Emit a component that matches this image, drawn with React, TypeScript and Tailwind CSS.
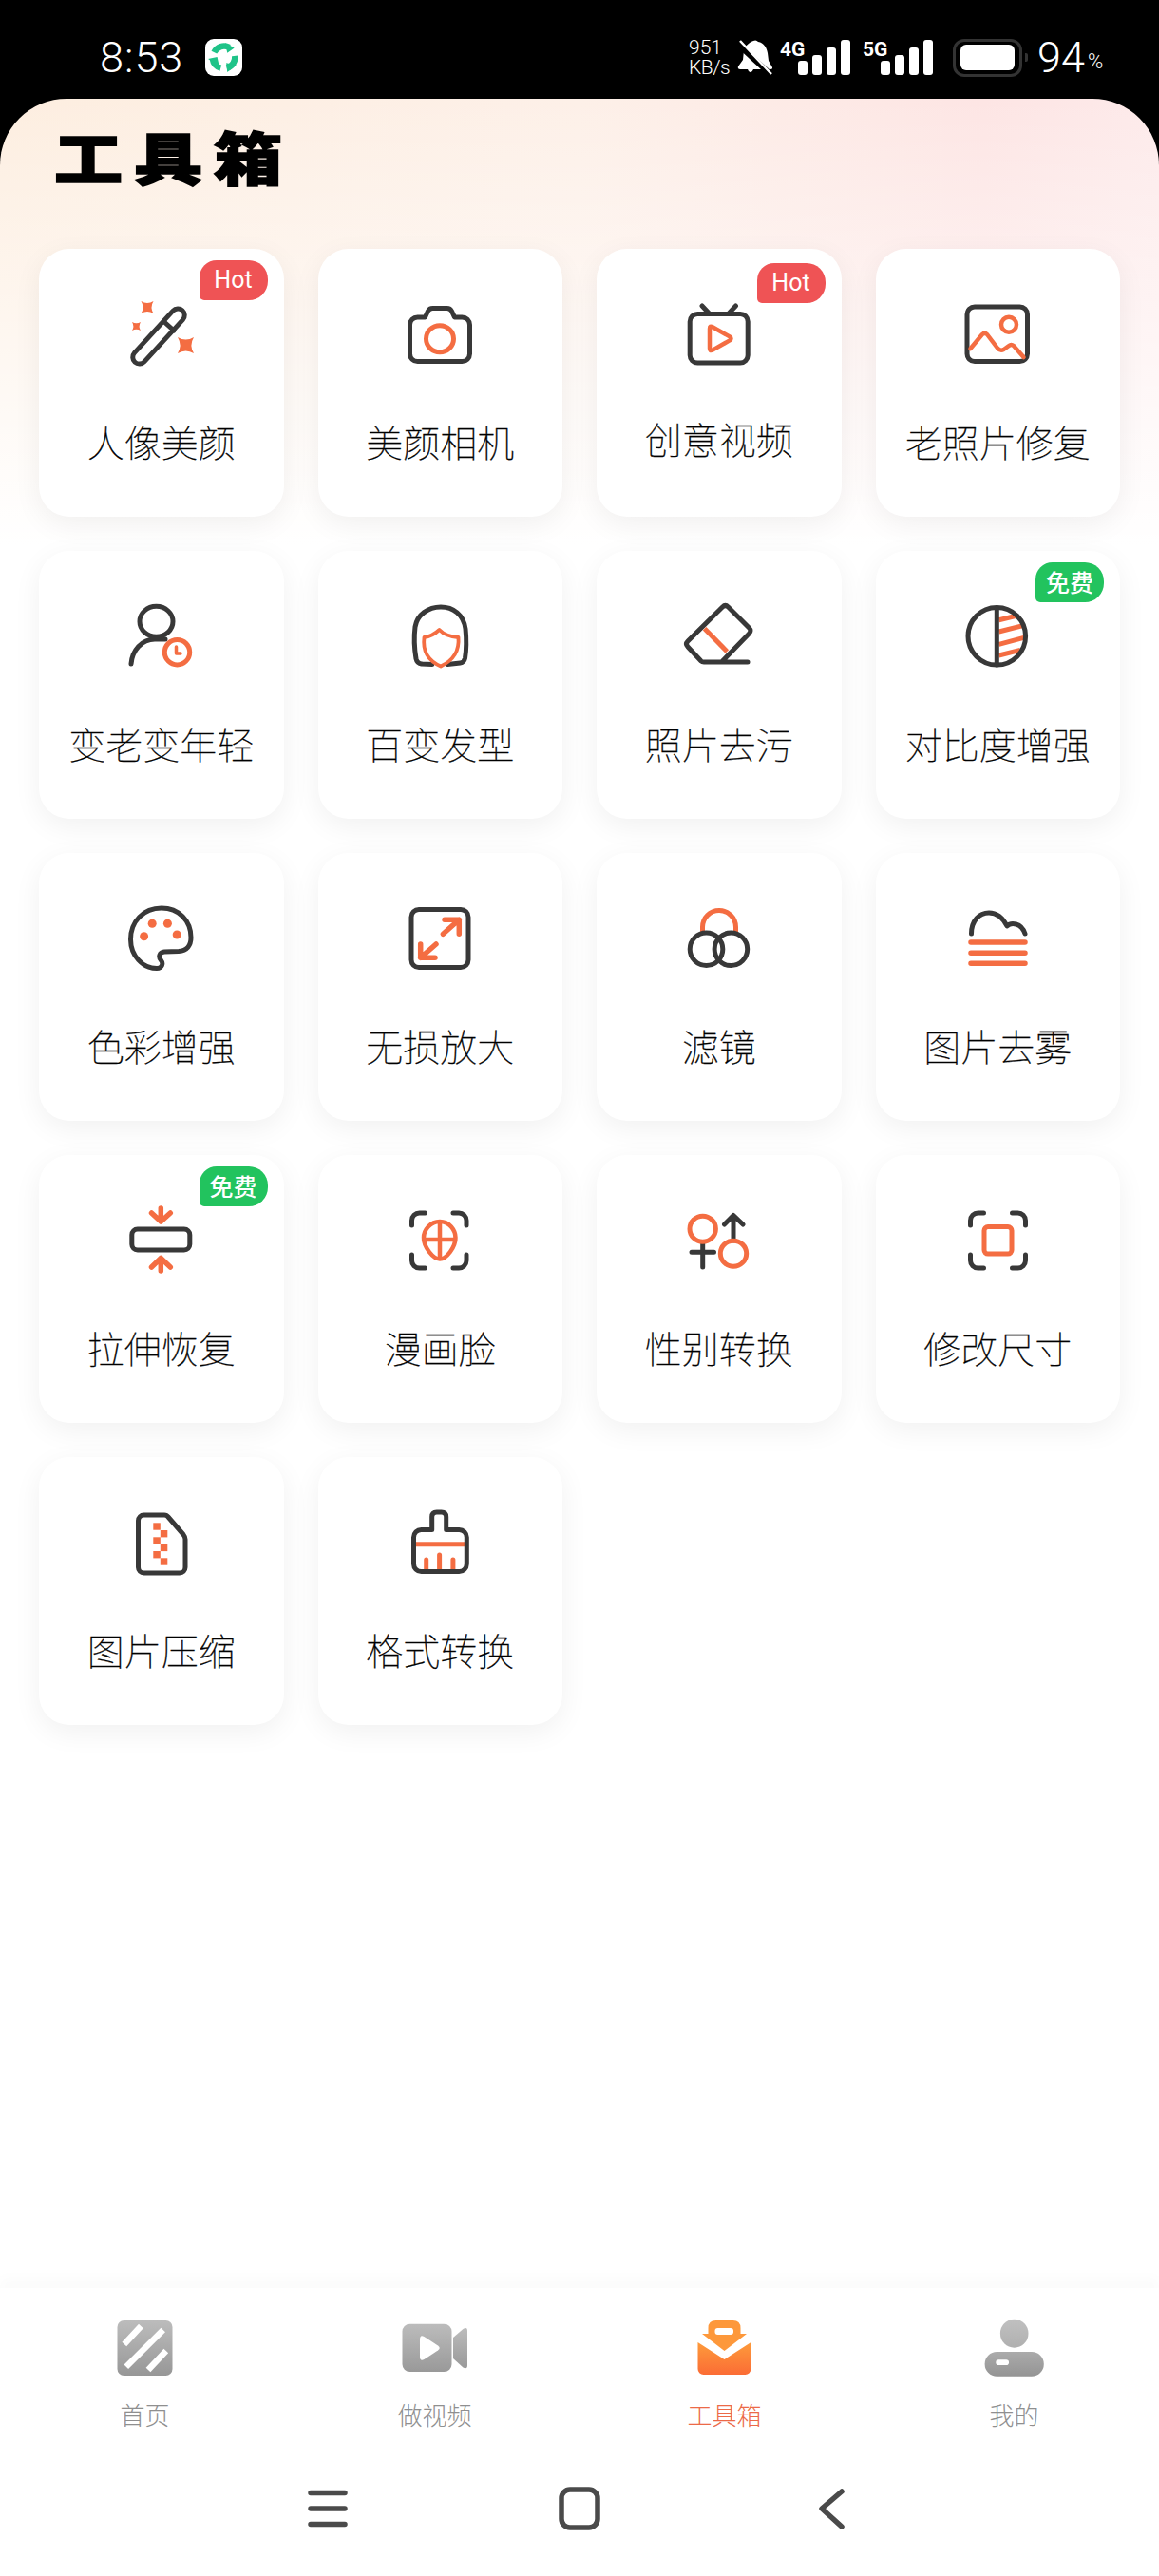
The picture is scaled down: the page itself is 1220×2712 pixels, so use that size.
import type { ReactNode } from "react";

const DARK = "#383838";
const ORANGE = "#f46d42";

/** Stroke defaults shared by the 80x80 tool icons. */
function Ico({ children }: { children: ReactNode }) {
  return (
    <svg width="80" height="80" viewBox="0 0 80 80" fill="none" strokeWidth="5" strokeLinecap="round" strokeLinejoin="round">
      {children}
    </svg>
  );
}

function Star({ x, y, r }: { x: number; y: number; r: number }) {
  const s = r * 0.2;
  return (
    <path
      fill={ORANGE}
      d={`M${x - r} ${y - r}Q${x} ${y - s * 2} ${x + r} ${y - r}Q${x + s * 2} ${y} ${x + r} ${y + r}Q${x} ${y + s * 2} ${x - r} ${y + r}Q${x - s * 2} ${y} ${x - r} ${y - r}z`}
    />
  );
}

const Brackets = ({ l, r }: { l: number; r: number }) => (
  <path
    stroke={DARK}
    d={`M${l} 24v-5a8 8 0 0 1 8-8h6M${r} 24v-5a8 8 0 0 0-8-8h-6M${l} 55v6a8 8 0 0 0 8 8h6M${r} 55v6a8 8 0 0 1-8 8h-6`}
  />
);

const icons: Record<string, ReactNode> = {
  wand: (
    <Ico>
      <rect x="0" y="-7" width="74" height="14" rx="7" stroke={DARK} transform="translate(37 42) rotate(-47.5) translate(-37 0)" />
      <path d="M43 27l10 9" stroke={DARK} />
      <Star x={25} y={11.5} r={6.5} />
      <Star x={13.5} y={31.5} r={4.5} />
      <Star x={65.5} y={51.5} r={8.5} />
    </Ico>
  ),
  camera: (
    <Ico>
      <path stroke={DARK} d="M16.5 22h8l3-6.5q1.5-3 5-3h15q3.5 0 5 3l3 6.5h8a8 8 0 0 1 8 8v30.5a8 8 0 0 1-8 8h-47a8 8 0 0 1-8-8V30a8 8 0 0 1 8-8z" />
      <ellipse cx="40" cy="44.7" rx="14.5" ry="14" stroke={ORANGE} />
    </Ico>
  ),
  tv: (
    <Ico>
      <rect x="9.2" y="18.5" width="61" height="51.5" rx="8" stroke={DARK} />
      <path stroke={DARK} d="M22 10l7 7.5M57.5 10l-7 7.5" />
      <path stroke={ORANGE} strokeWidth="4.500" d="M30 34q0-3.500 3-1.800l18 10.200q3 2 0 4l-18 10.200q-3 1.600-3-1.800z" />
    </Ico>
  ),
  photo: (
    <Ico>
      <rect x="8" y="11" width="63.500" height="57.500" rx="8" stroke={DARK} />
      <ellipse cx="52" cy="29.700" rx="8" ry="8" stroke={ORANGE} strokeWidth="4.500" />
      <path stroke={ORANGE} strokeWidth="4.500" d="M11.500 55L24 40q2.500-2.500 5 0l11 14.500q3 3.500 6.500 1.500l5.500-4q2.500-2 5 0L67.500 64" />
    </Ico>
  ),
  aging: (
    <Ico>
      <ellipse cx="34.500" cy="24.300" rx="17.500" ry="16" stroke={DARK} />
      <path stroke={DARK} d="M8 69C9 55 19 43 33 43H44" />
      <circle cx="56.500" cy="56.700" r="13.200" fill="#fff" stroke={ORANGE} />
      <path stroke={ORANGE} strokeWidth="3.500" d="M55.500 51v7h4.500" />
    </Ico>
  ),
  hair: (
    <Ico>
      <path stroke={DARK} d="M21 69q-5-.5-6-5.500C13 52 13 38 14 30C16 17 28 9 41 9C54 9 65 17 67 32C68 42 68 54 66.500 63q-1 4.500-5 5L48 69.500M21 69l11 .500" />
      <path stroke={ORANGE} strokeWidth="3.800" d="M39.500 33Q46 40 59.500 41C60.500 53 57 64 41 71.500C26 65 22 53 23.500 41Q32 40 39.500 33z" />
    </Ico>
  ),
  eraser: (
    <Ico>
      <path stroke={DARK} d="M43.500 9q3-3 6 0l22 22q3 3 0 6L42.500 67H24q-2 0-3-1L7 51q-3-3 0-6zM42.500 67H70" />
      <path stroke={ORANGE} strokeLinecap="butt" d="M24.600 31.700L48.300 56" />
    </Ico>
  ),
  contrast: (
    <Ico>
      <path stroke={ORANGE} strokeLinecap="butt" d="M41.500 22.700L60 18.300M41.500 35L67.800 28.300M41.500 48.300L70.500 40.700M41.500 60L64 54.300" />
      <circle cx="39.300" cy="39.800" r="30.300" stroke={DARK} />
      <path stroke={DARK} d="M39.300 10v60" />
    </Ico>
  ),
  palette: (
    <Ico>
      <path stroke={DARK} d="M40 8C21 8 7.500 22 7.500 41C7.500 58 20 71.500 35 71.500C41 71.500 42 66 39.500 63C36 59 38 54.500 43 54L58 53.500C67 53 71 47 71 39C71 21 58 8 40 8z" />
      <g fill={ORANGE}>
        <circle cx="30.200" cy="24.300" r="4.500" />
        <circle cx="46.400" cy="24.300" r="4.500" />
        <circle cx="56.200" cy="36" r="4.500" />
        <circle cx="21.600" cy="37.700" r="4.500" />
      </g>
    </Ico>
  ),
  expand: (
    <Ico>
      <rect x="10" y="9.500" width="60" height="61" rx="8" stroke={DARK} />
      <path stroke={ORANGE} strokeWidth="5.500" d="M45 20.300h15.300v15M60.300 20.300L43.400 35.300M19.700 46v14.300H35M19.700 60.300L36 46" />
    </Ico>
  ),
  filter: (
    <Ico>
      <path stroke={ORANGE} strokeLinecap="butt" d="M22.500 33v-5a17.500 17.500 0 0 1 35 0v5" />
      <ellipse cx="26.500" cy="51.300" rx="17.300" ry="17.300" stroke={DARK} />
      <ellipse cx="52.400" cy="51.300" rx="17.300" ry="17.300" stroke={DARK} />
    </Ico>
  ),
  fog: (
    <Ico>
      <path stroke={DARK} d="M12.500 35C12.500 21 21 13 31 13C40 13 46 19 50 27C54 23 65 23 69 35" />
      <path stroke={ORANGE} strokeWidth="5.500" d="M12 44H69M12 55.300H69M12 66.300H69" />
    </Ico>
  ),
  stretch: (
    <Ico>
      <rect x="8.800" y="28" width="61" height="22" rx="6" stroke={DARK} />
      <path stroke={ORANGE} strokeWidth="5.500" d="M39.300 6v14M29.500 11l9.800 9 10-9M39.300 72V58.500M29.500 68l9.800-9.500 10 9.500" />
    </Ico>
  ),
  face: (
    <Ico>
      <Brackets l={10.500} r={68} />
      <path stroke={ORANGE} strokeWidth="4.500" d="M40 20C50 20 56.500 29 56.500 37C56.500 47 47 59.500 40 59.500C33 59.500 23 47 23 37C23 29 30 20 40 20zM40 20V59.500M23 39H56.500" />
    </Ico>
  ),
  gender: (
    <Ico>
      <path stroke={DARK} d="M22.700 43V68M11 52.300H34.500M55 40V14M45.500 23L55 13.500 65 23" />
      <ellipse cx="22.700" cy="27.700" rx="13.700" ry="13.500" stroke={ORANGE} />
      <ellipse cx="55" cy="53.700" rx="13.700" ry="13.500" stroke={ORANGE} />
    </Ico>
  ),
  resize: (
    <Ico>
      <Brackets l={11.500} r={69.500} />
      <rect x="26" y="25.500" width="29" height="28.600" rx="4" stroke={ORANGE} />
    </Ico>
  ),
  zip: (
    <Ico>
      <path stroke={DARK} d="M21.500 11H43q2.500 0 4 2L63 31.500q2 2.500 2 5V66a6 6 0 0 1-6 6H21.500a6 6 0 0 1-6-6V17a6 6 0 0 1 6-6z" />
      <g fill={ORANGE}>
        <rect x="31.300" y="19.300" width="7.500" height="7.400" />
        <rect x="38.800" y="27" width="7.500" height="7.400" />
        <rect x="31.300" y="34.300" width="7.500" height="7.400" />
        <rect x="38.800" y="41.700" width="7.500" height="7.400" />
        <rect x="31.300" y="49" width="7.500" height="7.400" />
        <rect x="38.800" y="56.300" width="7.500" height="7.400" />
      </g>
    </Ico>
  ),
  brush: (
    <Ico>
      <path stroke={ORANGE} strokeLinecap="butt" strokeWidth="5" d="M14 41.700H67" />
      <path stroke={ORANGE} d="M25.700 58V68M39.600 53V68M53.900 58V68" />
      <path stroke={DARK} d="M31.700 26.500V13q0-5 5-5h5q5 0 5 5v13.500H60.300a8 8 0 0 1 8 8V62.500a8 8 0 0 1-8 8H20.500a8 8 0 0 1-8-8V34.500a8 8 0 0 1 8-8z" />
    </Ico>
  ),
};

type Tool = { label: string; icon: string; badge?: "Hot" | "免费"; nudged?: boolean };

const tools: Tool[] = [
  { label: "人像美颜", icon: "wand", badge: "Hot" },
  { label: "美颜相机", icon: "camera" },
  { label: "创意视频", icon: "tv", badge: "Hot", nudged: true },
  { label: "老照片修复", icon: "photo" },
  { label: "变老变年轻", icon: "aging" },
  { label: "百变发型", icon: "hair" },
  { label: "照片去污", icon: "eraser" },
  { label: "对比度增强", icon: "contrast", badge: "免费" },
  { label: "色彩增强", icon: "palette" },
  { label: "无损放大", icon: "expand" },
  { label: "滤镜", icon: "filter" },
  { label: "图片去雾", icon: "fog" },
  { label: "拉伸恢复", icon: "stretch", badge: "免费" },
  { label: "漫画脸", icon: "face" },
  { label: "性别转换", icon: "gender" },
  { label: "修改尺寸", icon: "resize" },
  { label: "图片压缩", icon: "zip" },
  { label: "格式转换", icon: "brush" },
];

function ToolCard({ label, icon, badge, nudged }: Tool) {
  return (
    <div className="relative flex h-[282px] flex-col items-center rounded-[32px] bg-white pt-[50px] shadow-[0_8px_30px_rgba(0,0,0,0.06)]">
      {badge && (
        <span
          className={`absolute right-[17px] flex h-[42px] w-[72px] items-center justify-center rounded-[18px_20px_20px_5px] text-[25px] text-white ${
            nudged ? "top-[15px]" : "top-3"
          } ${badge === "Hot" ? "bg-[#ef5355] font-['Roboto',sans-serif]" : "bg-[#22c35e] font-medium"}`}
        >
          {badge}
        </span>
      )}
      {icons[icon]}
      <span className={`text-[39px] leading-[48px] font-thin text-black [-webkit-text-stroke:0.3px_black] ${nudged ? "mt-[45px]" : "mt-[48px]"}`}>{label}</span>
    </div>
  );
}

function Signal({ tag }: { tag: string }) {
  return (
    <div className="relative h-[37px] w-[74px]">
      <span className="absolute top-0 left-0 text-[21px] leading-[20px] font-bold text-white font-['Roboto',sans-serif]">{tag}</span>
      <div className="absolute right-0 bottom-0 flex items-end gap-[5px]">
        <div className="h-[15px] w-[10px] rounded-[3px] bg-white" />
        <div className="h-[21px] w-[10px] rounded-[3px] bg-white" />
        <div className="h-[29px] w-[10px] rounded-[3px] bg-white" />
        <div className="h-[37px] w-[10px] rounded-[3px] bg-white" />
      </div>
    </div>
  );
}

function StatusBar() {
  return (
    <div className="flex h-[104px] shrink-0 items-center justify-between pt-[17px] pr-[58px] pl-[105px] text-white font-['Roboto',sans-serif] font-light">
      <div className="flex items-center gap-[23px]">
        <span className="text-[45px] leading-[45px] tracking-[1px]">8:53</span>
        <div className="flex h-[39px] w-[39px] items-center justify-center rounded-[9px] bg-white">
          <svg width="33" height="33" viewBox="0 0 31 31" fill="none" stroke="#1fc388" strokeWidth="6">
            <path d="M6 10.500A11 11 0 0 1 21 5.500" />
            <path d="M26.500 14A11 11 0 0 1 18.500 26" />
            <path d="M12.500 26A11 11 0 0 1 4.500 17" />
            <path fill="#1fc388" stroke="none" d="M17 1l9 5-7 5zM28 23l-9 7-1-9zM0 17l9-2 2 9z" />
          </svg>
        </div>
      </div>
      <div className="flex items-center">
        <div className="mr-[8px] flex w-[43px] flex-col text-[21px] leading-[21px]">
          <span>951</span>
          <span className="tracking-[-0.5px]">KB/s</span>
        </div>
        <svg width="37" height="38" viewBox="0 0 37 38" fill="none" className="mr-[8px]">
          <path fill="#fff" d="M17 1q3-1.500 5 1c6 1 9 6 10 12l1 8 4 7q.5 2-2 2H17q-2 5-5 2l-1-2H3q-3 0-2-3l5-7 1-10c1-4 5-8 10-10z" />
          <path stroke="#000" strokeWidth="6" d="M-1 3L37 38" />
          <path stroke="#fff" strokeWidth="2.500" d="M3 1L36 36" />
        </svg>
        <div className="flex gap-[13px]">
          <Signal tag="4G" />
          <Signal tag="5G" />
        </div>
        <div className="ml-[21px] flex h-[40px] w-[73px] items-center justify-center rounded-[12px] border-[3px] border-[#333]">
          <div className="h-[27px] w-[57px] rounded-[6px] bg-white" />
        </div>
        <div className="ml-[3px] h-[9px] w-[3px] rounded-r-[2px] bg-[#333]" />
        <span className="ml-[10px] w-[50px] text-[45px] leading-[45px]">94</span>
        <span className="mt-[8px] ml-[3px] w-[17px] text-[22px] leading-[22px]">%</span>
      </div>
    </div>
  );
}

function HomeTab() {
  return (
    <svg width="72" height="62" viewBox="0 0 72 62" fill="none">
      <defs>
        <linearGradient id="gHome" x1="0" y1="0" x2="0" y2="1">
          <stop offset="0" stopColor="#bcbcbc" />
          <stop offset="1" stopColor="#979797" />
        </linearGradient>
      </defs>
      <rect x="6.500" y="2" width="58" height="58" rx="7" fill="url(#gHome)" />
      <path stroke="#fff" strokeWidth="6.500" d="M13.800 27L31.400 8M15.800 50.700L54.700 12M39 54L57.800 34" />
    </svg>
  );
}

function VideoTab() {
  return (
    <svg width="72" height="62" viewBox="0 0 72 62" fill="none">
      <defs>
        <linearGradient id="gVideo" x1="0" y1="0" x2="0" y2="1">
          <stop offset="0" stopColor="#bcbcbc" />
          <stop offset="1" stopColor="#999" />
        </linearGradient>
      </defs>
      <rect x="1.500" y="5.700" width="52" height="50.300" rx="8" fill="url(#gVideo)" />
      <path fill="url(#gVideo)" d="M55 20L65.500 11q4.500-3 4.500 2V49q0 5-4.500 2.500L55 42z" />
      <path fill="#fff" d="M20 22q0-5.500 4.500-3l14.500 9.500q3.500 2.500 0 5L24.500 43q-4.500 2.500-4.500-3z" />
    </svg>
  );
}

function ToolboxTab() {
  return (
    <svg width="72" height="62" viewBox="0 0 72 62" fill="none">
      <defs>
        <linearGradient id="gBag" x1="0" y1="0" x2="0" y2="1">
          <stop offset="0" stopColor="#fd9b3b" />
          <stop offset="1" stopColor="#fb6c35" />
        </linearGradient>
      </defs>
      <path fill="#fd983b" d="M12 16H18.500V10q0-8 8-8h18q8 0 8 8V16H59L35.500 34z" />
      <rect x="25.500" y="10" width="19.500" height="7" rx="3" fill="#fff" />
      <path fill="url(#gBag)" d="M7.500 25L35.500 43 63.500 25V53a6 6 0 0 1-6 6H13.500a6 6 0 0 1-6-6z" />
    </svg>
  );
}

function MineTab() {
  return (
    <svg width="72" height="62" viewBox="0 0 72 62" fill="none">
      <defs>
        <linearGradient id="gHead" x1="0" y1="0" x2="0" y2="1">
          <stop offset="0" stopColor="#c0c0c0" />
          <stop offset="1" stopColor="#b0b0b0" />
        </linearGradient>
        <linearGradient id="gBody" x1="0" y1="0" x2="0" y2="1">
          <stop offset="0" stopColor="#ababab" />
          <stop offset="1" stopColor="#949494" />
        </linearGradient>
      </defs>
      <ellipse cx="35.700" cy="15.700" rx="14.800" ry="15" fill="url(#gHead)" />
      <rect x="4.600" y="35" width="62.200" height="25.700" rx="12.800" fill="url(#gBody)" />
      <rect x="16.300" y="43.300" width="13.700" height="5.700" rx="2.800" fill="#fff" />
    </svg>
  );
}

const tabs = [
  { label: "首页", icon: <HomeTab /> },
  { label: "做视频", icon: <VideoTab /> },
  { label: "工具箱", icon: <ToolboxTab />, active: true },
  { label: "我的", icon: <MineTab /> },
];

function BottomNav() {
  return (
    <div className="h-[303px] shrink-0 bg-white shadow-[0_-12px_12px_rgba(0,0,0,0.016)]">
      <div className="grid grid-cols-4 pt-[32px]">
        {tabs.map((t) => (
          <div key={t.label} className="flex flex-col items-center">
            {t.icon}
            <span className={`mt-[23px] text-[26px] leading-[32px] font-light ${t.active ? "text-[#ec6a48]" : "text-[#8f8f8f]"}`}>{t.label}</span>
          </div>
        ))}
      </div>
      <div className="mt-[58px] flex justify-center text-[#4a4a4a]">
        <div className="flex w-[265px] justify-center">
          <svg width="44" height="50" viewBox="0 0 44 50" fill="none" stroke="currentColor" strokeWidth="5.500" strokeLinecap="round">
            <path d="M4 8.500H40M4 25H40M4 41.500H40" />
          </svg>
        </div>
        <div className="flex w-[265px] justify-center">
          <svg width="44" height="50" viewBox="0 0 44 50" fill="none" stroke="currentColor" strokeWidth="5.500">
            <rect x="3" y="5" width="38" height="40" rx="9" />
          </svg>
        </div>
        <div className="flex w-[265px] justify-center">
          <svg width="30" height="50" viewBox="0 0 30 50" fill="none" stroke="currentColor" strokeWidth="5.500" strokeLinecap="round" strokeLinejoin="round">
            <path d="M26 7L5 25 26 44" />
          </svg>
        </div>
      </div>
    </div>
  );
}

export default function App() {
  return (
    <div className="flex h-[2712px] w-[1220px] flex-col bg-black font-['Noto_Sans_CJK_SC','Noto_Sans',sans-serif]">
      <StatusBar />
      <main className="min-h-0 flex-1 rounded-t-[70px] bg-white bg-[linear-gradient(180deg,rgba(255,255,255,0)_0%,#fff_100%),linear-gradient(90deg,#fdeee0_0%,#fdf0e8_50%,#fde5e4_85%,#fdeaea_100%)] bg-[length:100%_470px] bg-no-repeat">
        <h1 className="h-[158px] pt-[21px] pl-[57px] text-[72px] leading-[78px] font-black tracking-[12px] text-black [-webkit-text-stroke:2px_black]">
          <span className="inline-block origin-center scale-y-[0.84]">工具箱</span>
        </h1>
        <div className="grid grid-cols-4 gap-9 px-[41px]">
          {tools.map((t) => (
            <ToolCard key={t.label} {...t} />
          ))}
        </div>
      </main>
      <BottomNav />
    </div>
  );
}
